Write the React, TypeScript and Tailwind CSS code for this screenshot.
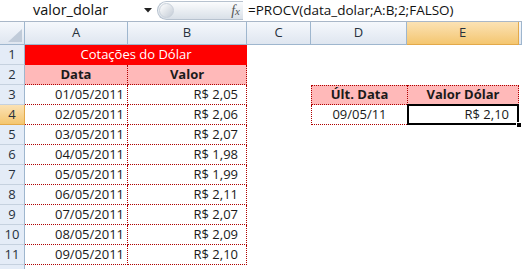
import React from "react";

const rows = [
  { d: "01/05/2011", v: "R$ 2,05" },
  { d: "02/05/2011", v: "R$ 2,06" },
  { d: "03/05/2011", v: "R$ 2,07" },
  { d: "04/05/2011", v: "R$ 1,98" },
  { d: "05/05/2011", v: "R$ 1,99" },
  { d: "06/05/2011", v: "R$ 2,11" },
  { d: "07/05/2011", v: "R$ 2,07" },
  { d: "08/05/2011", v: "R$ 2,09" },
  { d: "09/05/2011", v: "R$ 2,10" },
];

const colHead =
  "flex items-center justify-center border-r border-b border-[#9eb6ce] bg-gradient-to-b from-[#f5f8fc] to-[#dfe6f0] text-[13px] text-[#27313c]";
const colHeadSel =
  "flex items-center justify-center border-r border-b border-[#e3a94a] bg-gradient-to-b from-[#fbe2b4] to-[#f4c66f] text-[13px] text-[#27313c]";
const rowHead =
  "flex items-center justify-center border-r border-b border-r-[#9eb6ce] border-b-[#c5d1df] bg-[#e4ecf7] text-[13px] text-[#27313c]";
const rowHeadSel =
  "flex items-center justify-center border-r border-b border-r-[#e3a94a] border-b-[#e3a94a] bg-gradient-to-b from-[#fbe2b4] to-[#f4c66f] text-[13px] text-[#27313c]";
const dotted = "border-dotted border-[#b00000]";

const App = () => {
  return (
    <div className="h-[269px] w-[522px] overflow-hidden bg-white font-['Open_Sans',sans-serif] text-[#1a1a1a]">
      {/* formula bar */}
      <div className="flex h-[22px] items-center border-b border-[#a9b7c8] bg-white">
        <div className="flex w-[155px] items-center">
          <span className="ml-[33px] w-[108px] text-[14.5px] leading-none text-[#111]">valor_dolar</span>
          <svg width="8" height="5" viewBox="0 0 8 5" className="ml-[3px]">
            <path d="M0 0h8L4 4.5z" fill="#222" />
          </svg>
        </div>
        <div className="relative ml-[2px] flex h-[19px] w-[86px] items-center justify-end rounded-l-full border border-r-0 border-[#b7c2cf] bg-gradient-to-b from-[#fbfcfd] to-[#d9e0e8] pr-[3px]">
          <div className="absolute left-[1px] top-[1px] h-[15px] w-[15px] rounded-full border border-[#c9d1db] bg-gradient-to-br from-[#ffffff] to-[#c4ccd6]" />
          <span className="font-['Liberation_Serif',serif] text-[14px] italic leading-none text-[#555]">
            f<span className="text-[11px]">x</span>
          </span>
        </div>
        <span className="ml-[5px] text-[13.5px] leading-none text-[#111]">=PROCV(data_dolar;A:B;2;FALSO)</span>
      </div>

      {/* sheet */}
      <div className="grid grid-cols-[25px_103px_119px_64px_96px_112px_1fr] grid-rows-[23px_repeat(11,20px)_20px]">
        {/* header row */}
        <div className="flex items-end justify-end border-r border-b border-[#9eb6ce] bg-gradient-to-b from-[#f5f8fc] to-[#dfe6f0] p-[2px]">
          <svg width="14" height="13" viewBox="0 0 14 13">
            <path d="M14 0V13H0z" fill="#c0cbd9" />
          </svg>
        </div>
        <div className={colHead}>A</div>
        <div className={colHead}>B</div>
        <div className={colHead}>C</div>
        <div className={colHead}>D</div>
        <div className={colHeadSel}>E</div>
        <div className={colHead} />

        {/* row 1 */}
        <div className={rowHead}>1</div>
        <div className="col-span-2 flex items-center justify-center bg-[#ff0000] text-[13px] text-white">
          Cotações do Dólar
        </div>
        <div className="col-span-4" />

        {/* row 2 */}
        <div className={rowHead}>2</div>
        <div className={`flex items-center justify-center border-r border-b bg-[#ffb9b9] text-[13px] font-bold ${dotted}`}>
          Data
        </div>
        <div className={`flex items-center justify-center border-r border-b bg-[#ffb9b9] text-[13px] font-bold ${dotted}`}>
          Valor
        </div>
        <div className="col-span-4" />

        {rows.map((r, i) => {
          const n = i + 3;
          return (
            <React.Fragment key={n}>
              <div className={n === 4 ? rowHeadSel : rowHead}>{n}</div>
              <div className={`flex items-center justify-end border-r border-b pr-[3px] text-[13px] ${dotted}`}>{r.d}</div>
              <div className={`flex items-center justify-end border-r border-b pr-[8px] text-[13px] ${dotted}`}>{r.v}</div>
              <div />
              {n === 3 && (
                <>
                  <div className={`flex items-center justify-center border border-r-0 bg-[#ffb9b9] text-[13px] font-bold ${dotted}`}>
                    Últ. Data
                  </div>
                  <div className={`flex items-center justify-center border bg-[#ffb9b9] text-[13px] font-bold ${dotted}`}>
                    Valor Dólar
                  </div>
                </>
              )}
              {n === 4 && (
                <>
                  <div className={`flex items-center justify-center border-l border-b text-[13px] ${dotted}`}>09/05/11</div>
                  <div className={`relative flex items-center justify-end border-x border-b pr-[9px] text-[13px] ${dotted}`}>
                    R$ 2,10
                    <div className="absolute -left-[1px] -right-[1px] -top-[1px] -bottom-[1px] border-2 border-black" />
                    <div className="absolute -bottom-[4px] -right-[4px] h-[6px] w-[6px] border border-white bg-black" />
                  </div>
                </>
              )}
              {n > 4 && <div className="col-span-2" />}
              <div />
            </React.Fragment>
          );
        })}

        {/* row 12, only its top edge shows */}
        <div className={rowHead} />
        <div className="col-span-6" />
      </div>
    </div>
  );
};

export default App;
